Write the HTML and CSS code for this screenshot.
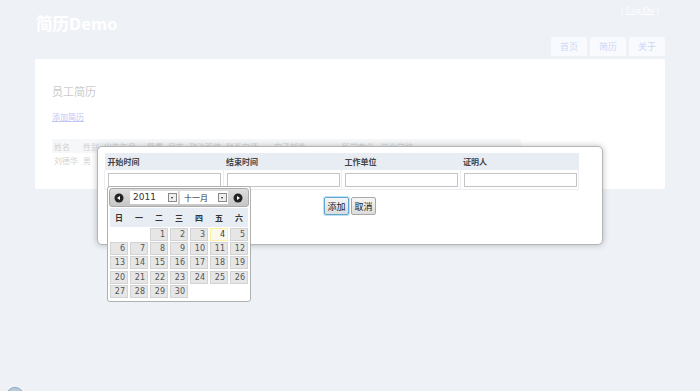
FILE: index.html
```html
<!DOCTYPE html>
<html lang="zh-CN">
<head>
    <meta charset="UTF-8">
    <meta name="viewport" content="width=device-width, initial-scale=1.0">
    <title>简历Demo</title>
    <link rel="stylesheet" href="styles.css">
</head>
<body>

    <div class="page">
        <!-- Header -->
        <div class="header">
            <h1 class="title">简历Demo</h1>
            <div class="login">[ <a href="#">Log On</a> ]</div>
        </div>
        <div class="menu">
            <a class="tab" href="#">首页</a>
            <a class="tab" href="#">简历</a>
            <a class="tab" href="#">关于</a>
        </div>

        <!-- Main -->
        <div class="main">
            <h2>员工简历</h2>
            <a class="add-link" href="#">添加简历</a>
            <table class="list">
                <tr>
                    <th class="c1">姓名</th><th class="c2">性别</th><th class="c3">出生年月</th><th class="c4">籍贯</th><th class="c5">民族</th>
                    <th class="c6">政治面貌</th><th class="c7">联系电话</th><th class="c8">电子邮件</th><th class="c9">所学专业</th><th>毕业学校</th>
                </tr>
                <tr>
                    <td>刘德华</td><td>男</td><td></td><td></td><td></td><td></td><td></td><td></td><td></td><td></td>
                </tr>
            </table>
        </div>
    </div>

    <!-- Dialog -->
    <div class="dialog">
        <table class="work">
            <tr>
                <th>开始时间</th><th>结束时间</th><th>工作单位</th><th>证明人</th>
            </tr>
            <tr>
                <td><input class="input-box" type="text"></td>
                <td><input class="input-box" type="text"></td>
                <td><input class="input-box" type="text"></td>
                <td><input class="input-box" type="text"></td>
            </tr>
        </table>
        <div class="actions">
            <button class="btn add-btn">添加</button><button class="btn">取消</button>
        </div>
    </div>

    <!-- Datepicker -->
    <div class="datepicker">
        <div class="dp-head">
            <svg class="dp-nav" width="10" height="10" viewBox="0 0 10 10"><circle cx="5" cy="5" r="4.5" fill="#222"/><path d="M3 5 L6 3 L6 7 Z" fill="#fff"/></svg>
            <span class="dp-select year">2011<i class="caret"></i></span>
            <span class="dp-select month">十一月<i class="caret"></i></span>
            <svg class="dp-nav" width="10" height="10" viewBox="0 0 10 10"><circle cx="5" cy="5" r="4.5" fill="#222"/><path d="M7 5 L4 3 L4 7 Z" fill="#fff"/></svg>
        </div>
        <div class="dp-days">
            <span>日</span><span>一</span><span>二</span><span>三</span><span>四</span><span>五</span><span>六</span>
        </div>
        <div class="dp-grid" id="dpGrid"></div>
    </div>

    <span class="corner-dot"></span>

    <script>
        let grid = document.getElementById("dpGrid");
        let html = "";
        for (let i = 0; i < 2; i++) html += '<span class="empty"></span>';
        for (let d = 1; d <= 30; d++) {
            html += '<span class="day' + (d === 4 ? ' today' : '') + '">' + d + '</span>';
        }
        grid.innerHTML = html;
    </script>

</body>
</html>
```

FILE: styles.css
```css
body {
    margin: 0;
    padding: 0;
    background: #eef1f6;
    font-family: "Noto Sans CJK SC", "DejaVu Sans", sans-serif;
    color: #333;
}
.page { width: 630px; margin: 0 auto; }

.header {
    display: flex;
    justify-content: space-between;
    align-items: flex-start;
    height: 37px;
}
.title {
    margin: 13px 0 0 1px;
    font-size: 16.5px;
    line-height: 21px;
    font-weight: bold;
    color: #fff;
    font-family: "Open Sans", "Noto Sans CJK SC", sans-serif;
}
.login {
    margin: 5px 6px 0 0;
    font-size: 9px;
    line-height: 11px;
    color: #fff;
    font-family: "Liberation Serif", serif;
}
.login a { color: #fff; }

.menu { display: flex; justify-content: flex-end; gap: 3px; height: 19px; }
.tab {
    width: 36px;
    height: 19px;
    line-height: 19px;
    text-align: center;
    font-size: 9px;
    color: #ccd7f6;
    text-decoration: none;
    background: #f9fafd;
    border-radius: 2px 2px 0 0;
}

.main {
    margin-top: 3px;
    height: 105px;
    padding: 25px 17px 0;
    background: #fff;
    border-radius: 0 0 3px 3px;
}
.main h2 {
    margin: 0;
    font-size: 11px;
    line-height: 14px;
    font-weight: normal;
    color: #cbcbcb;
}
.add-link {
    display: inline-block;
    margin-top: 14px;
    font-size: 8px;
    line-height: 10px;
    color: #bcc8f2;
}
.list {
    margin-top: 14px;
    border-collapse: collapse;
    width: 469px;
    font-size: 8px;
    color: #d2d2d2;
}
.list th, .list td {
    text-align: left;
    font-weight: normal;
    padding: 0 2px;
    height: 14px;
}
.list th { background: #f6f7f9; }
.list .c1 { width: 25px; }
.list .c2 { width: 17px; }
.list .c3 { width: 39px; }
.list .c4, .list .c5 { width: 17px; }
.list .c6 { width: 33px; }
.list .c7 { width: 44px; }
.list .c8 { width: 64px; }
.list .c9 { width: 35px; }

/* Dialog */
.dialog {
    position: absolute;
    left: 97px;
    top: 146px;
    width: 492px;
    height: 84px;
    padding: 6px 6px 7px;
    background: #fff;
    border: 1px solid #b5b5b5;
    border-radius: 5px;
    box-shadow: 0 0 6px rgba(0, 0, 0, 0.25);
}
.work { border-collapse: collapse; table-layout: fixed; width: 475px; }
.work th {
    background: #e8edf3;
    height: 17px;
    padding: 0 3px;
    text-align: left;
    font-size: 8px;
    font-weight: bold;
    color: #444;
}
.work td {
    height: 19px;
    padding: 0 2px 0 3px;
    border: 1px solid #ebeef2;
    border-top: none;
}
.input-box {
    display: block;
    box-sizing: border-box;
    width: 113px;
    height: 14px;
    margin: 0;
    border: 1px solid #c4c4c4;
    padding: 0;
}
.actions { margin-top: 7px; text-align: center; font-size: 0; }
.btn {
    width: 25px;
    height: 18px;
    padding: 0;
    margin: 0 1px;
    font-size: 9px;
    font-family: "Noto Sans CJK SC", sans-serif;
    color: #222;
    border: 1px solid #a8a8a8;
    border-radius: 2px;
    background: linear-gradient(#f6f6f6, #dcdcdc);
}
.add-btn { border-color: #5fa8d3; box-shadow: 0 0 0 1px #bfe0f3; }

/* Datepicker */
.datepicker {
    position: absolute;
    left: 107px;
    top: 186px;
    width: 140px;
    padding: 1px 1px 3px;
    background: #fff;
    border: 1px solid #b0b0b0;
    border-radius: 3px;
    font-family: "DejaVu Sans", sans-serif;
    font-size: 8px;
}
.dp-head {
    display: flex;
    align-items: center;
    box-sizing: border-box;
    height: 19px;
    padding: 0 5px 0 4px;
    background: linear-gradient(#dedede, #c6c6c6);
    border: 1px solid #aaa;
    border-radius: 3px;
}
.dp-nav { flex: none; }
.dp-select {
    position: relative;
    box-sizing: border-box;
    width: 48px;
    height: 13px;
    line-height: 13px;
    padding-left: 3px;
    background: #fff;
    color: #333;
}
.year { margin-left: 6px; font-size: 9px; }
.month { margin: 0 auto 0 2px; font-family: "Noto Sans CJK SC", sans-serif; padding-left: 4px; }
.caret {
    position: absolute;
    right: 1px;
    top: 2px;
    width: 7px;
    height: 7px;
    border: 1px solid #888;
    background: #eee;
}
.caret::after {
    content: "";
    position: absolute;
    left: 2px;
    top: 3px;
    border-left: 1.5px solid transparent;
    border-right: 1.5px solid transparent;
    border-top: 2px solid #222;
}
.dp-days {
    display: grid;
    grid-template-columns: repeat(7, 18px);
    column-gap: 2px;
    height: 19px;
    margin: 1px 1px 0;
    align-items: center;
    background: #e8edf4;
    font-family: "Noto Sans CJK SC", sans-serif;
    font-weight: bold;
    color: #333;
    text-align: center;
}
.dp-grid {
    display: grid;
    grid-template-columns: repeat(7, 18px);
    grid-auto-rows: 13px;
    gap: 1.2px 2px;
    margin: 1px 1px 0;
}
.dp-grid span {
    box-sizing: border-box;
    line-height: 11px;
    padding-right: 2px;
    text-align: right;
    color: #555;
}
.dp-grid .day { background: #e6e6e6; border: 1px solid #d3d3d3; }
.dp-grid .today { background: #fbf9ee; border-color: #fcefa1; color: #363636; }

.corner-dot {
    position: absolute;
    left: 6px;
    top: 387px;
    width: 16px;
    height: 16px;
    border-radius: 50%;
    background: #b9cadb;
    border: 1px solid #8ea6be;
}
```
